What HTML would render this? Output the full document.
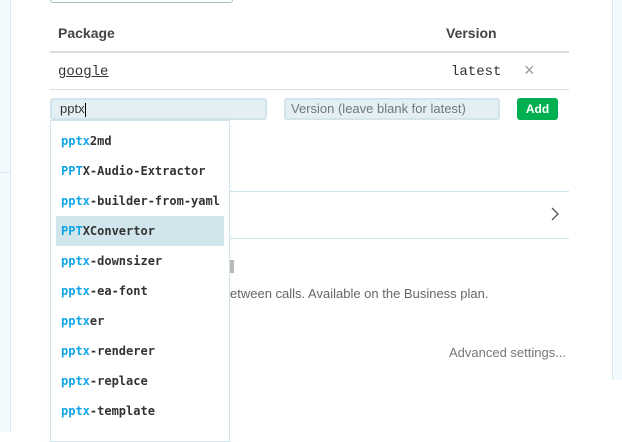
<!DOCTYPE html>
<html><head><style>
body{margin:0;width:622px;height:432px;position:relative;overflow:hidden;background:#fff;font-family:"Liberation Sans",sans-serif;}
.a{position:absolute}
.mono{font-family:"DejaVu Sans Mono","Liberation Mono",monospace;font-weight:bold;font-size:12px;color:#333}
.hl{color:#10a6e6}
</style></head><body>
<div class="a" style="left:0;top:0;width:10px;height:432px;background:#f3fafd;border-right:1px solid #d6eaf2"></div>
<div class="a" style="left:0;top:172px;width:10px;height:1px;background:#d6eaf2"></div>
<div class="a" style="left:612px;top:0;width:10px;height:380px;background:#f3fafd;border-left:1px solid #d6eaf2"></div>
<div class="a" style="left:50px;top:-6px;width:181px;height:7px;border:1px solid #a8bfc8;border-radius:3px"></div>
<div class="a" style="left:58px;top:25px;font-weight:bold;font-size:14px;color:#444">Package</div>
<div class="a" style="left:446px;top:25px;font-weight:bold;font-size:14px;color:#444">Version</div>
<div class="a" style="left:50px;top:51px;width:519px;height:2px;background:#ddd"></div>
<div class="a" style="left:58px;top:64px;font-family:'Liberation Mono',monospace;font-size:14px;color:#333;text-decoration:underline">google</div>
<div class="a" style="left:451px;top:64px;font-family:'Liberation Mono',monospace;font-size:14px;color:#333">latest</div>
<div class="a" style="left:524px;top:60px;font-size:18px;color:#999">×</div>
<div class="a" style="left:50px;top:89px;width:519px;height:1px;background:#ddd"></div>
<div class="a" style="left:50px;top:98px;height:18px;background:#e4eff4;border:2px solid #d2e4ec;border-radius:3px;font-size:13px;color:#333;line-height:18px;padding-left:8px;width:205px">pptx<span style="border-left:1px solid #000;height:14px;display:inline-block;vertical-align:middle"></span></div>
<div class="a" style="left:284px;top:98px;width:207px;height:18px;background:#e4eff4;border:2px solid #d2e4ec;border-radius:3px;font-size:13px;color:#6a7a82;line-height:18px;padding-left:5px">Version (leave blank for latest)</div>
<div class="a" style="left:517px;top:98px;width:41px;height:22px;background:#00b050;border-radius:3px;color:#fff;font-weight:bold;font-size:12px;text-align:center;line-height:22px">Add</div>
<div class="a" style="left:230px;top:191px;width:339px;height:1px;background:#d2e4ec"></div>
<div class="a" style="left:230px;top:238px;width:339px;height:1px;background:#d2e4ec"></div>
<svg class="a" style="left:550px;top:207px" width="10" height="14"><path d="M2 1 L8 7 L2 13" fill="none" stroke="#555" stroke-width="1.3"/></svg>
<div class="a" style="left:228px;top:260px;width:6px;height:13px;background:#bbb"></div>
<div class="a" style="left:230px;top:286px;font-size:13px;color:#666">etween calls. Available on the Business plan.</div>
<div class="a" style="left:449px;top:345px;font-size:13px;color:#777">Advanced settings...</div>
<div class="a" style="left:50px;top:120px;width:178px;height:320px;background:#fff;border:1px solid #d2e4ec;box-shadow:0 1px 3px rgba(0,0,0,.08)"></div>
<div class="a" style="left:56px;top:216px;width:168px;height:30px;background:#d0e5ec"></div>
<div class="a mono" style="left:61px;top:126px;line-height:30px">
<div><span class="hl">pptx</span>2md</div>
<div><span class="hl">PPT</span>X-Audio-Extractor</div>
<div><span class="hl">pptx</span>-builder-from-yaml</div>
<div><span class="hl">PPT</span>XConvertor</div>
<div><span class="hl">pptx</span>-downsizer</div>
<div><span class="hl">pptx</span>-ea-font</div>
<div><span class="hl">pptx</span>er</div>
<div><span class="hl">pptx</span>-renderer</div>
<div><span class="hl">pptx</span>-replace</div>
<div><span class="hl">pptx</span>-template</div>
</div>
</body></html>
